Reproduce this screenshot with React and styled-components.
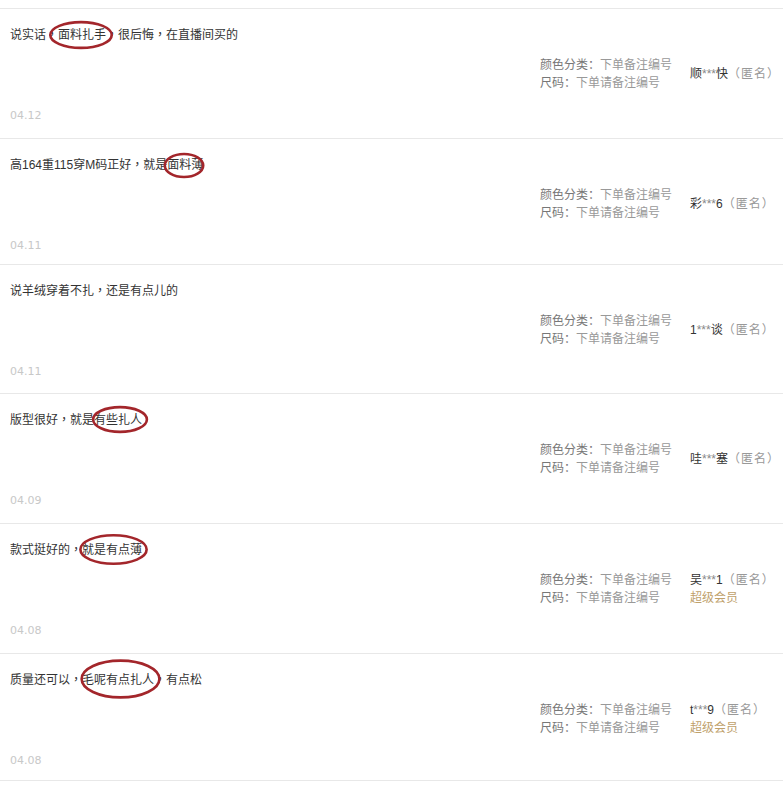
import React from "react";
import styled, { createGlobalStyle } from "styled-components";

const Global = createGlobalStyle`
  html, body { margin: 0; padding: 0; background: #fff; }
  body {
    font-family: "Liberation Sans", Arial, "Noto Sans CJK SC", sans-serif;
    font-size: 12px;
    color: #333;
  }
`;

const List = styled.div`
  margin-top: 8px;
  width: 783px;
  border-top: 1px solid #e8e8e8;
`;

const Row = styled.div`
  display: flex;
  flex-direction: column;
  padding: 17px 10px ${(p) => p.$pb}px;
  border-bottom: 1px solid #e8e8e8;
`;

const Comment = styled.div`
  line-height: 18px;
  height: 18px;
  color: #333;
  white-space: nowrap;
`;

const P = styled.span`
  font-family: "Noto Sans CJK TC", "Noto Sans CJK SC", sans-serif;
  line-height: 1;
`;

const Mark = styled.span`
  position: relative;
`;

const Oval = styled.svg`
  position: absolute;
  left: ${(p) => -p.$l}px;
  top: ${(p) => -p.$t}px;
  width: calc(100% + ${(p) => p.$l + p.$r}px);
  height: calc(100% + ${(p) => p.$t + p.$b}px);
  overflow: visible;
  pointer-events: none;
`;

const Info = styled.div`
  display: flex;
  align-items: center;
  margin-top: 12px;
  padding-left: 530px;
`;

const Meta = styled.div`
  flex: 0 0 150px;
  line-height: 18px;
`;

const MetaLine = styled.div`
  color: #999;
  white-space: nowrap;
`;

const MetaLabel = styled.span`
  color: #777;
`;

const User = styled.div`
  flex: 0 0 auto;
  line-height: 18px;
  white-space: nowrap;
`;

const Nick = styled.span`
  color: #333;
`;

const Stars = styled.span`
  color: #888;
`;

const Anon = styled.span`
  color: #999;
  letter-spacing: 1px;
`;

const Vip = styled.div`
  color: #c0a16b;
`;

const DateText = styled.div`
  margin-top: 15px;
  line-height: 18px;
  color: #c8c8c8;
  font-family: Tahoma, "DejaVu Sans", "Liberation Sans", sans-serif;
  font-size: 11px;
`;

function Circle({ children, l, r, t, b }) {
  return (
    <Mark>
      {children}
      <Oval $l={l} $r={r} $t={t} $b={b} viewBox="0 0 100 100" preserveAspectRatio="none">
        <ellipse
          cx="50"
          cy="50"
          rx="48"
          ry="46"
          fill="none"
          stroke="#a3262b"
          strokeWidth="2.6"
          vectorEffect="non-scaling-stroke"
        />
      </Oval>
    </Mark>
  );
}

const reviews = [
  {
    text: (
      <>
        说实话<P>，</P><Circle l={9} r={7} t={7} b={7}>面料扎手</Circle><P>，</P>很后悔<P>，</P>在直播间买的
      </>
    ),
    nick: ["顺", "快"],
    date: "04.12",
    pb: 13,
  },
  {
    text: (
      <>
        高164重115穿M码正好<P>，</P>就是<Circle l={3} r={1} t={5} b={6}>面料薄</Circle>
      </>
    ),
    nick: ["彩", "6"],
    date: "04.11",
    pb: 9,
  },
  {
    text: (
      <>
        说羊绒穿着不扎<P>，</P>还是有点儿的
      </>
    ),
    nick: ["1", "谈"],
    date: "04.11",
    pb: 12,
  },
  {
    text: (
      <>
        版型很好<P>，</P>就是<Circle l={2} r={6} t={7} b={6}>有些扎人</Circle>
      </>
    ),
    nick: ["哇", "塞"],
    date: "04.09",
    pb: 13,
  },
  {
    text: (
      <>
        款式挺好的<P>，</P><Circle l={3} r={6} t={9} b={8}>就是有点薄</Circle>
      </>
    ),
    nick: ["吴", "1"],
    vip: true,
    date: "04.08",
    pb: 13,
  },
  {
    text: (
      <>
        质量还可以<P>，</P><Circle l={2} r={7} t={14} b={12}>毛呢有点扎人</Circle><P>，</P>有点松
      </>
    ),
    nick: ["t", "9"],
    vip: true,
    date: "04.08",
    pb: 10,
  },
];

export default function App() {
  return (
    <>
      <Global />
      <List>
        {reviews.map((r, i) => (
          <Row key={i} $pb={r.pb}>
            <Comment>{r.text}</Comment>
            <Info>
              <Meta>
                <MetaLine>
                  <MetaLabel>颜色分类：</MetaLabel>下单备注编号
                </MetaLine>
                <MetaLine>
                  <MetaLabel>尺码：</MetaLabel>下单请备注编号
                </MetaLine>
              </Meta>
              <User>
                <div>
                  <Nick>{r.nick[0]}</Nick>
                  <Stars>***</Stars>
                  <Nick>{r.nick[1]}</Nick>
                  <Anon>（匿名）</Anon>
                </div>
                {r.vip && <Vip>超级会员</Vip>}
              </User>
            </Info>
            <DateText>{r.date}</DateText>
          </Row>
        ))}
      </List>
    </>
  );
}
